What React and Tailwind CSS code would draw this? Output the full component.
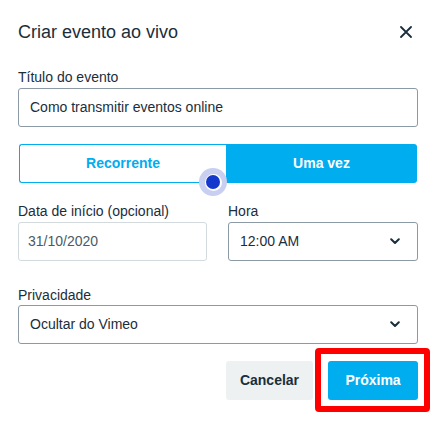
import React from "react";

function Chevron() {
  return (
    <svg width="10" height="7" viewBox="0 0 10 7" fill="none">
      <path d="M1.2 1.2 L5 5 L8.8 1.2" stroke="#1a2e3b" strokeWidth="2" strokeLinecap="round" strokeLinejoin="round" />
    </svg>
  );
}

export default function App() {
  return (
    <div className="relative w-[437px] h-[427px] bg-white text-[#1a2e3b] overflow-hidden" style={{ fontFamily: '"Liberation Sans", Arial, sans-serif' }}>
      <div className="pl-[18px] pr-[19px] pt-[21px]">
        <div className="flex items-center justify-between h-[22px]">
          <h1 className="text-[18px] leading-[22px] font-normal text-[#1a2e3b]">Criar evento ao vivo</h1>
          <svg width="12" height="12" viewBox="0 0 12 12" className="mr-[6px]">
            <path d="M1 1 L11 11 M11 1 L1 11" stroke="#1a2e3b" strokeWidth="1.8" strokeLinecap="round" />
          </svg>
        </div>

        <div className="mt-[26px] text-[14px] leading-[17px]">Título do evento</div>
        <div className="mt-[2px] h-[39px] border border-[#8c9aa5] rounded-[3px] flex items-center px-[11px] text-[14px] text-[#1a2e3b]">
          Como transmitir eventos online
        </div>

        <div className="relative mt-[17px] h-[39px] flex mx-[1px]">
          <div className="w-[207px] border border-[#00adef] border-r-0 rounded-l-[3px] flex items-center justify-center text-[14px] font-bold text-[#00adef]">
            Recorrente
          </div>
          <div className="flex-1 bg-[#00adef] rounded-r-[3px] flex items-center justify-center text-[14px] font-bold text-white">
            Uma vez
          </div>
          <div className="absolute left-[180px] top-[24px] w-[28px] h-[28px] rounded-full bg-[#c8cff0] flex items-center justify-center">
            <div className="w-[17px] h-[17px] rounded-full bg-white flex items-center justify-center">
              <div className="w-[14px] h-[14px] rounded-full bg-[#1438cc]" />
            </div>
          </div>
        </div>

        <div className="mt-[20px] flex gap-[21px]">
          <div className="w-[189px]">
            <div className="text-[14px] leading-[17px]">Data de início (opcional)</div>
            <div className="mt-[2px] h-[39px] border border-[#d3dade] rounded-[3px] flex items-center px-[9px] text-[14px] text-[#4a5a66]">
              31/10/2020
            </div>
          </div>
          <div className="flex-1">
            <div className="text-[14px] leading-[17px]">Hora</div>
            <div className="mt-[2px] h-[39px] border border-[#8c9aa5] rounded-[3px] flex items-center justify-between pl-[11px] pr-[17px] text-[14px] text-[#1a2e3b]">
              <span>12:00 AM</span>
              <Chevron />
            </div>
          </div>
        </div>

        <div className="mt-[26px] text-[14px] leading-[17px]">Privacidade</div>
        <div className="mt-[1px] h-[39px] border border-[#8c9aa5] rounded-[3px] flex items-center justify-between pl-[11px] pr-[17px] text-[14px] text-[#1a2e3b]">
          <span>Ocultar do Vimeo</span>
          <Chevron />
        </div>

        <div className="mt-[17px] flex justify-end gap-[15px]">
          <button className="w-[87px] h-[39px] rounded-[3px] bg-[#eef1f2] text-[14px] font-bold text-[#1a2e3b]">Cancelar</button>
          <button className="w-[90px] h-[39px] rounded-[3px] bg-[#00adef] text-[14px] font-bold text-white">Próxima</button>
        </div>
      </div>

      <div className="absolute left-[315px] top-[348px] w-[115px] h-[64px] border-[6px] border-[#ff0000] rounded-[4px] pointer-events-none" />
    </div>
  );
}
